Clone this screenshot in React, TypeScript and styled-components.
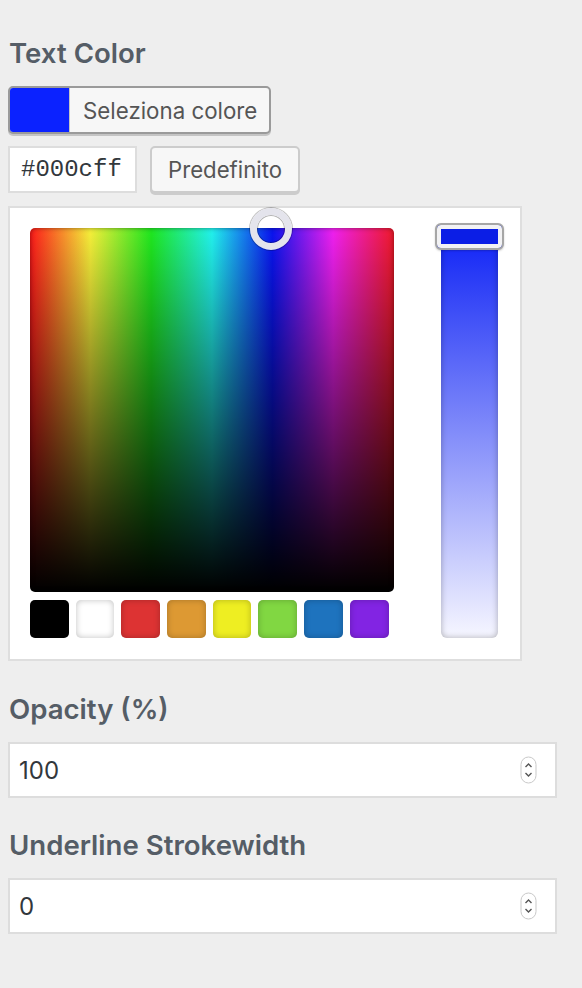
import * as React from 'react';
import styled, { createGlobalStyle } from 'styled-components';

const PALETTE = ['#000000', '#ffffff', '#dd3333', '#dd9933', '#eeee22', '#81d742', '#1e73be', '#8224e3'];

const App: React.FC = () => {
  return (
    <>
      <GlobalStyle />
      <Panel>
        <Label>Text Color</Label>
        <ColorButton type="button">
          <ColorChip color="#0b22ff" />
          <ColorButtonText>Seleziona colore</ColorButtonText>
        </ColorButton>
        <HexRow>
          <HexInput type="text" defaultValue="#000cff" />
          <DefaultButton type="button">Predefinito</DefaultButton>
        </HexRow>
        <PickerBox>
          <Square>
            <SquareHandle />
          </Square>
          <Palette>
            {PALETTE.map((c) => (
              <PaletteSwatch key={c} color={c} />
            ))}
          </Palette>
          <Strip>
            <StripHandle />
          </Strip>
        </PickerBox>

        <Label $top={31}>Opacity (%)</Label>
        <NumberField>
          <NumberInput type="text" defaultValue="100" />
          <Spinner />
        </NumberField>

        <Label $top={30}>Underline Strokewidth</Label>
        <NumberField>
          <NumberInput type="text" defaultValue="0" />
          <Spinner />
        </NumberField>
      </Panel>
    </>
  );
};

const Spinner: React.FC = () => (
  <SpinnerIcon width="17" height="28" viewBox="0 0 17 28">
    <rect x="1" y="1" width="15" height="26" rx="7.5" fill="#fff" stroke="#c9c9c9" />
    <path d="M5.5 11 L8.5 8 L11.5 11" fill="none" stroke="#555" strokeWidth="1.4" />
    <path d="M5.5 17 L8.5 20 L11.5 17" fill="none" stroke="#555" strokeWidth="1.4" />
  </SpinnerIcon>
);

const GlobalStyle = createGlobalStyle`
  html, body {
    margin: 0;
    padding: 0;
    background: #eeeeee;
  }
  body {
    font-family: 'Inter', 'Open Sans', 'Liberation Sans', sans-serif;
  }
  * {
    box-sizing: border-box;
  }
`;

const Panel = styled.div`
  display: flex;
  flex-direction: column;
  align-items: flex-start;
  width: 582px;
  min-height: 988px;
  padding: 36px 25px 0 8px;
`;

const Label = styled.div<{ $top?: number }>`
  margin: ${(p) => p.$top ?? 0}px 0 16px 1px;
  color: #555d66;
  font-size: 27.6px;
  font-weight: 600;
  line-height: 34px;
`;

const ColorButton = styled.button`
  display: flex;
  align-items: stretch;
  width: 263px;
  height: 48px;
  padding: 0;
  border: 2px solid #9a9a9a;
  border-radius: 5px;
  background: #f7f7f7;
  box-shadow: 0 2px 0 #c4c4c4;
  overflow: hidden;
  cursor: pointer;
`;

const ColorChip = styled.span<{ color: string }>`
  width: 60px;
  background: ${(p) => p.color};
  border-right: 1px solid #c4c4c4;
`;

const ColorButtonText = styled.span`
  display: flex;
  align-items: center;
  padding-left: 13px;
  color: #555555;
  font-family: 'Inter', sans-serif;
  font-size: 22.3px;
`;

const HexRow = styled.div`
  display: flex;
  align-items: flex-start;
  gap: 13px;
  margin-top: 12px;
`;

const HexInput = styled.input`
  width: 129px;
  height: 47px;
  padding: 0 0 0 11px;
  border: 2px solid #dddddd;
  background: #ffffff;
  color: #32373c;
  font-family: 'Liberation Mono', 'DejaVu Sans Mono', monospace;
  font-size: 24px;
  outline: none;
`;

const DefaultButton = styled.button`
  width: 150px;
  height: 47px;
  padding: 0;
  border: 2px solid #cccccc;
  border-radius: 5px;
  background: #f7f7f7;
  box-shadow: 0 2px 0 #cccccc;
  color: #555555;
  font-family: 'Inter', sans-serif;
  font-size: 22.2px;
  cursor: pointer;
`;

const PickerBox = styled.div`
  display: grid;
  grid-template-columns: 364px 57px;
  grid-template-rows: 364px 38px;
  column-gap: 47px;
  row-gap: 8px;
  width: 514px;
  height: 455px;
  margin-top: 13px;
  padding: 20px 0 0 20px;
  border: 2px solid #dedede;
  background: #ffffff;
`;

const Square = styled.div`
  position: relative;
  border-radius: 5px;
  background: linear-gradient(to bottom, rgba(0, 0, 0, 0), #000000),
    linear-gradient(to right, #ff1a1a, #f6f03a 16.6%, #1fe81f 33.3%, #22f2ee 50%, #0a14f0 66.6%, #f020f0 83.3%, #f01a2a);
  box-shadow: inset 0 0 5px rgba(0, 0, 0, 0.45);
`;

const SquareHandle = styled.div`
  position: absolute;
  left: 220px;
  top: -20px;
  width: 42px;
  height: 42px;
  border-radius: 50%;
  border: 7px solid #e4e4ec;
  box-shadow: 0 0 0 1px rgba(0, 0, 0, 0.25), inset 0 0 0 1px rgba(0, 0, 0, 0.3);
`;

const Palette = styled.div`
  display: grid;
  grid-template-columns: repeat(8, 38.7px);
  column-gap: 7px;
`;

const PaletteSwatch = styled.div<{ color: string }>`
  height: 38px;
  border-radius: 5px;
  background: ${(p) => p.color};
  box-shadow: inset 0 0 6px rgba(0, 0, 0, 0.25);
`;

const Strip = styled.div`
  position: relative;
  grid-column: 2;
  grid-row: 1 / span 2;
  border-radius: 6px;
  background: linear-gradient(to bottom, #0d20f8, #2a3cf6 12%, #f6f6ff);
  box-shadow: inset 0 0 6px rgba(0, 0, 0, 0.3);
`;

const StripHandle = styled.div`
  position: absolute;
  left: -6px;
  top: -5px;
  width: 69px;
  height: 27px;
  border: 2px solid #a6a6a6;
  border-radius: 6px;
  background: #0b1ee6;
  box-shadow: inset 0 0 0 4px #f2f2f4, 0 1px 2px rgba(0, 0, 0, 0.2);
`;

const NumberField = styled.div`
  position: relative;
  display: flex;
  align-items: center;
  width: 549px;
  height: 56px;
  border: 2px solid #dddddd;
  background: #ffffff;
`;

const NumberInput = styled.input`
  flex: 1;
  height: 100%;
  padding: 0 0 0 9px;
  border: none;
  background: transparent;
  color: #32373c;
  font-family: 'Inter', sans-serif;
  font-size: 24px;
  outline: none;
`;

const SpinnerIcon = styled.svg`
  margin-right: 18px;
  flex-shrink: 0;
`;

export default App;
